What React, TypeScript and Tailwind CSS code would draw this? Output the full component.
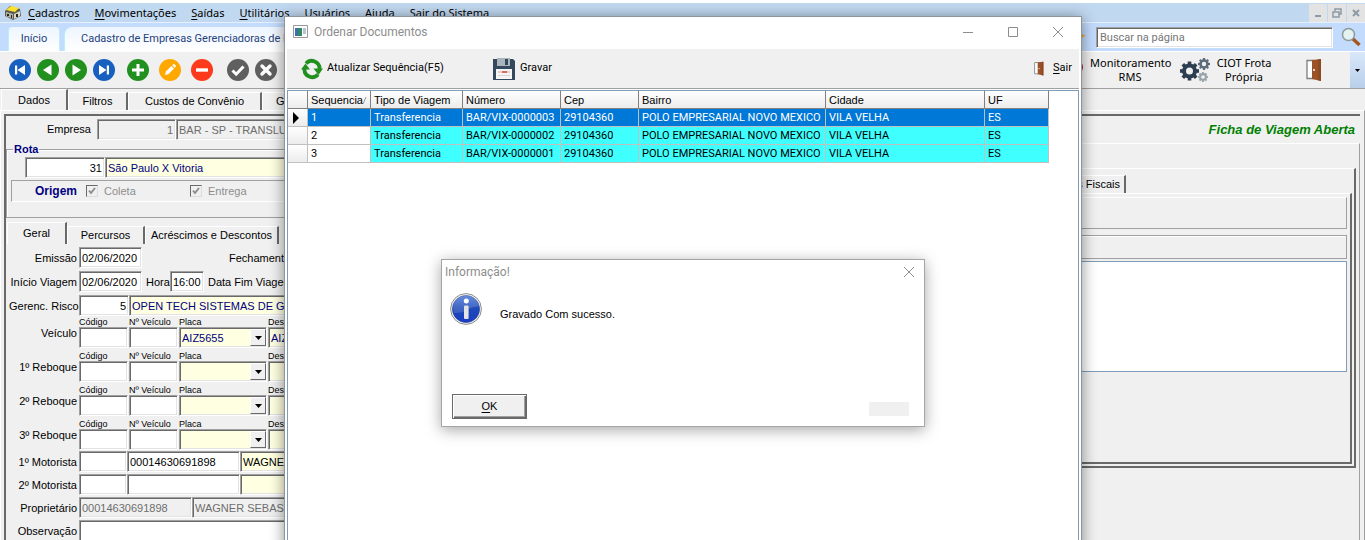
import React from 'react';

const menuItems = ['Cadastros', 'Movimentações', 'Saídas', 'Utilitários', 'Usuários', 'Ajuda', 'Sair do Sistema'];

const documentos = [
  { seq: 1, tipo: 'Transferencia', numero: 'BAR/VIX-0000003', cep: '29104360', bairro: 'POLO EMPRESARIAL NOVO MEXICO', cidade: 'VILA VELHA', uf: 'ES' },
  { seq: 2, tipo: 'Transferencia', numero: 'BAR/VIX-0000002', cep: '29104360', bairro: 'POLO EMPRESARIAL NOVO MEXICO', cidade: 'VILA VELHA', uf: 'ES' },
  { seq: 3, tipo: 'Transferencia', numero: 'BAR/VIX-0000001', cep: '29104360', bairro: 'POLO EMPRESARIAL NOVO MEXICO', cidade: 'VILA VELHA', uf: 'ES' },
];

const navIcons = [
  { label: 'Primeiro', color: '#1760c0', shape: <path d="M6 6.5h2.200v9H6zM16 6v10L8.500 11z" fill="#fff" /> },
  { label: 'Anterior', color: '#22901f', shape: <path d="M14.500 5.500v11L6 11z" fill="#fff" /> },
  { label: 'Próximo', color: '#22901f', shape: <path d="M7.500 5.500v11l8.500-5.500z" fill="#fff" /> },
  { label: 'Último', color: '#1760c0', shape: <path d="M13.800 6.500H16v9h-2.200zM6 6v10l7.500-5z" fill="#fff" /> },
];

const editIcons = [
  { label: 'Incluir', color: '#22901f', shape: <path d="M9.500 5h3v4.500H17v3h-4.500V17h-3v-4.500H5v-3h4.500z" fill="#fff" /> },
  { label: 'Editar', color: '#ffa800', shape: <path d="M6 16l.8-3.400 5.600-5.600 2.600 2.600-5.600 5.600zM13.200 6.200l1-1q.6-.4 1.200.1l1.300 1.300q.5.6 0 1.200l-1 1z" fill="#fff" /> },
  { label: 'Excluir', color: '#fd3a1c', shape: <path d="M5 9.300h12v3.400H5z" fill="#fff" /> },
];

const confirmIcons = [
  { label: 'Confirmar', color: '#5f5f5f', shape: <path d="M5.500 11.500l3.700 3.700 7.300-7.700" fill="none" stroke="#fff" strokeWidth="3" /> },
  { label: 'Cancelar', color: '#5f5f5f', shape: <path d="M7 7l8 8M15 7l-8 8" stroke="#fff" strokeWidth="3.400" strokeLinecap="round" /> },
];

const bevel =
  'border border-t-[#a0a0a0] border-l-[#a0a0a0] border-r-white border-b-white shadow-[inset_1px_1px_0_#696969,inset_-1px_-1px_0_#e3e3e3] outline-none rounded-none';

function Field({ label, value = '', className = '' }: { label: string; value?: string; className?: string }) {
  return <input aria-label={label} defaultValue={value} className={`${bevel} h-[21px] px-[2px] text-[11px] ${className}`} />;
}

function Tab({ children, active, className = '' }: { children: React.ReactNode; active?: boolean; className?: string }) {
  return (
    <button
      role="tab"
      aria-selected={!!active}
      className={`border-t border-l border-t-white border-l-white border-r-2 border-r-[#696969] whitespace-nowrap ${active ? 'self-stretch' : 'self-end h-[18px]'} ${className}`}
    >
      {children}
    </button>
  );
}

function RoundButton({ label, color, shape }: { label: string; color: string; shape: React.ReactNode }) {
  return (
    <button aria-label={label}>
      <svg width="22" height="22" viewBox="0 0 22 22" className="block">
        <circle cx="11" cy="11" r="11" fill={color} />
        {shape}
      </svg>
    </button>
  );
}

function DoorIcon({ className }: { className: string }) {
  return (
    <svg viewBox="0 0 16 22" className={className}>
      <path d="M1 1.500h6v18H1z" fill="#fff" stroke="#7d7d7d" strokeWidth="1.300" />
      <path d="M6 1l9-1v22l-9-2z" fill="#9b5228" />
      <path d="M12 .400L15 0v22l-3-.700z" fill="#8b4a22" />
      <circle cx="8" cy="11" r="1" fill="#fff" />
    </svg>
  );
}

function Gear({ x, y, r, color }: { x: number; y: number; r: number; color: string }) {
  return (
    <g transform={`translate(${x} ${y})`}>
      <circle r={r * 0.58} fill="none" stroke={color} strokeWidth={r * 0.42} />
      {[0, 45, 90, 135, 180, 225, 270, 315].map((a) => (
        <rect key={a} x={-r * 0.19} y={-r} width={r * 0.38} height={r * 0.35} fill={color} transform={`rotate(${a})`} />
      ))}
    </g>
  );
}

function MenuBar() {
  return (
    <div className="mt-[3px] flex h-[19px] items-center justify-between bg-[#c0d8f0]">
      <div className="flex items-center pl-1 font-['Noto_Sans',sans-serif] text-[11px]">
        <svg width="18" height="16" viewBox="0 0 18 16" className="mr-[6px]">
          <path d="M1 6l5-5 10 3 1 7-8 4-8-4z" fill="#5b5b50" />
          <path d="M2 5l5-4 8 2-4 4z" fill="#fbe22c" />
          <path d="M2 7l7 2v5l-7-3z" fill="#b4b4a4" />
          <path d="M10 9l6-3v5l-6 3z" fill="#d8d8c8" />
          <path d="M3 9h2v2H3zM7 10h1v3H7zM12 9h2v3h-2z" fill="#222" />
        </svg>
        <nav className="flex gap-[15px]">
          {menuItems.map((m) => (
            <a key={m} href="#" className="whitespace-nowrap leading-[19px]">
              <span className="underline underline-offset-2">{m[0]}</span>
              {m.slice(1)}
            </a>
          ))}
        </nav>
      </div>
      <div className="flex gap-px">
        <button aria-label="Minimizar" className="flex h-[18px] w-[18px] items-center justify-center bg-[#e3e3e3]">
          <svg width="10" height="10"><path d="M2 8h6" stroke="#8a9aa8" strokeWidth="2" /></svg>
        </button>
        <button aria-label="Restaurar" className="flex h-[18px] w-[18px] items-center justify-center bg-[#e3e3e3]">
          <svg width="10" height="10"><path d="M3 3V1h6v5H7M1 4h6v5H1z" fill="none" stroke="#8a9aa8" strokeWidth="1.500" /></svg>
        </button>
        <button aria-label="Fechar" className="flex h-[18px] w-[18px] items-center justify-center bg-[#e3e3e3]">
          <svg width="10" height="10"><path d="M2 2l6 6M8 2L2 8" stroke="#8a9aa8" strokeWidth="2" /></svg>
        </button>
      </div>
    </div>
  );
}

function PageTabs() {
  return (
    <div className="flex h-[29px] items-center justify-between border-t border-[#e6effb] bg-[#c3dbfd]">
      <div className="flex gap-1 self-stretch pl-2 pt-1 font-['Roboto',sans-serif] text-[11px] text-[#24427c]">
        <a href="#" className="flex w-[52px] items-center justify-center rounded-t-sm border-x border-[#b8f0fa] bg-gradient-to-b from-[#eef5ff] to-white">Início</a>
        <a href="#" className="flex w-[260px] items-center whitespace-nowrap rounded-tl-lg border-l border-[#b8f0fa] bg-gradient-to-b from-[#eef5ff] to-white pl-4">
          Cadastro de Empresas Gerenciadoras de R
        </a>
      </div>
      <div className="flex items-center pr-1">
        <svg width="18" height="18" viewBox="0 0 18 18" className="mr-[10px]">
          <path d="M9 1l2.500 5.500 6 .6-4.500 4 1.300 6L9 14l-5.300 3.100 1.300-6-4.500-4 6-.6z" fill="#f4a91d" />
        </svg>
        <input
          aria-label="Buscar na página"
          placeholder="Buscar na página"
          className={`${bevel} h-[21px] w-[237px] bg-white px-[3px] font-['Roboto',sans-serif] text-[11px] placeholder:text-[#757575]`}
        />
        <button aria-label="Buscar" className="ml-2">
          <svg width="20" height="20" viewBox="0 0 20 20" className="block">
            <path d="M11 11l7.500 7" stroke="#a3571f" strokeWidth="3.400" />
            <circle cx="7.500" cy="7.500" r="6" fill="#e4f3f1" stroke="#8c9a9a" strokeWidth="1.500" />
          </svg>
        </button>
      </div>
    </div>
  );
}

function Toolbar() {
  return (
    <div className="flex h-[38px] items-center justify-between border-t border-white border-b border-b-[#a0a0a0] bg-[#f0f0f0]">
      <div className="flex items-center pl-[9px]">
        <div className="flex gap-[6px]">{navIcons.map((i) => <RoundButton key={i.label} {...i} />)}</div>
        <div className="ml-3 flex gap-[10px]">{editIcons.map((i) => <RoundButton key={i.label} {...i} />)}</div>
        <div className="ml-[14px] flex gap-[6px]">{confirmIcons.map((i) => <RoundButton key={i.label} {...i} />)}</div>
      </div>
      <div className="flex items-center self-stretch font-['Noto_Sans',sans-serif] text-[11px] leading-[14px]">
        <button className="flex items-center gap-[7px]">
          <svg width="14" height="22"><ellipse cx="7" cy="8" rx="7" ry="7" fill="#a3124a" /><path d="M5 14h4v6H5z" fill="#888" /></svg>
          <span className="w-20">Monitoramento RMS</span>
        </button>
        <button className="ml-[10px] flex items-center gap-1">
          <svg width="30" height="26" viewBox="0 0 30 26">
            <Gear x={9.5} y={14} r={9.5} color="#2c3e50" />
            <Gear x={24} y={7} r={6} color="#5c6c7b" />
            <Gear x={23} y={20} r={5} color="#98a2aa" />
          </svg>
          <span className="w-[60px]">CIOT Frota Própria</span>
        </button>
        <button aria-label="Sair" className="ml-8">
          <DoorIcon className="block h-[22px] w-4" />
        </button>
        <button aria-label="Mais opções" className="ml-7 flex w-[15px] items-center justify-center self-stretch bg-gradient-to-b from-[#d9e8fa] to-[#b9cfea]">
          <svg width="5" height="3"><path d="M0 0h5L2.500 3z" /></svg>
        </button>
      </div>
    </div>
  );
}

function FormRow({ label, children }: { label: string; children: React.ReactNode }) {
  return (
    <div className="flex h-[21px]">
      <span className="w-[70px] shrink-0 pr-[2px] text-right leading-[23px] whitespace-nowrap">{label}</span>
      {children}
    </div>
  );
}

function VehicleRow({ label, placa = '', desc = '' }: { label: string; placa?: string; desc?: string }) {
  return (
    <div className="flex items-end">
      <span className="w-[70px] shrink-0 pr-[2px] pb-1 text-right leading-[21px] whitespace-nowrap">{label}</span>
      <label className="w-[50px] text-[9px] leading-[10px]">
        Código
        <Field label="Código" className="block w-[49px] bg-white" />
      </label>
      <label className="w-[50px] whitespace-nowrap text-[9px] leading-[10px]">
        Nº Veículo
        <Field label="Nº Veículo" className="block w-[49px] bg-white" />
      </label>
      <label className="w-[89px] text-[9px] leading-[10px]">
        Placa
        <span className="relative block">
          <select className={`${bevel} block h-[21px] w-[88px] appearance-none bg-[#ffffe1] px-[2px] text-[11px] text-[#000080]`}>
            <option>{placa}</option>
          </select>
          <span className="pointer-events-none absolute right-[2px] top-[2px] flex h-[17px] w-4 items-center justify-center border border-t-white border-l-white border-r-[#696969] border-b-[#696969] bg-[#f0f0f0]">
            <svg width="7" height="4"><path d="M0 0h7L3.500 4z" /></svg>
          </span>
        </span>
      </label>
      <label className="flex-1 text-[9px] leading-[10px]">
        Descrição
        <Field label="Descrição" value={desc} className="block w-full bg-[#ffffe1] text-[#000080]" />
      </label>
    </div>
  );
}

function TripForm() {
  return (
    <div className="w-[590px] shrink-0">
      <fieldset className="mr-1 h-[75px] border border-[#a0a0a0] pl-[4px] shadow-[inset_1px_1px_0_#fff]">
        <legend className="ml-[2px] px-px font-bold leading-[12px] text-[#000080]">Rota</legend>
        <div className="mt-[2px] flex pl-[14px]">
          <Field label="Código da rota" value="31" className="w-20 bg-white text-right" />
          <Field label="Rota" value="São Paulo X Vitoria" className="flex-1 bg-[#ffffe1] text-[#000080]" />
        </div>
        <div className="mt-[2px] flex h-[22px] items-center border border-[#a0a0a0] border-r-white border-b-white pl-[23px] text-[#8d8d8d]">
          <span className="w-[51px] text-[12px] font-bold text-[#000080]">Origem</span>
          {['Coleta', 'Entrega'].map((name) => (
            <label key={name} className="flex w-[104px] items-center gap-[6px]">
              <input type="checkbox" defaultChecked disabled className="peer sr-only" />
              <span className="flex h-3 w-3 items-center justify-center border border-t-[#696969] border-l-[#696969] border-r-[#dcdcdc] border-b-[#dcdcdc]">
                <svg width="8" height="8"><path d="M1 3.500l2 2.500 4-5" fill="none" stroke="#8d8d8d" strokeWidth="2" /></svg>
              </span>
              {name}
            </label>
          ))}
        </div>
      </fieldset>

      <div role="tablist" className="mt-1 flex h-[22px] pl-px">
        <Tab active className="w-[60px]">Geral</Tab>
        <Tab className="w-[78px]">Percursos</Tab>
        <Tab className="w-[134px]">Acréscimos e Descontos</Tab>
      </div>

      <div className="flex flex-col gap-[3px] pl-[3px] pt-[3px]">
        <FormRow label="Emissão">
          <Field label="Emissão" value="02/06/2020" className="w-[63px] bg-white" />
          <span className="ml-[87px] leading-[23px]">Fechamento</span>
        </FormRow>
        <FormRow label="Início Viagem">
          <Field label="Início Viagem" value="02/06/2020" className="w-[63px] bg-white" />
          <span className="ml-1 w-6 leading-[23px]">Hora</span>
          <Field label="Hora" value="16:00" className="w-[34px] bg-white" />
          <span className="ml-1 leading-[23px]">Data Fim Viagem</span>
        </FormRow>
        <FormRow label="Gerenc. Risco">
          <Field label="Código do gerenciador" value="5" className="w-[50px] bg-white text-right" />
          <Field label="Gerenciador de risco" value="OPEN TECH SISTEMAS DE GERENCIAMENTO" className="flex-1 bg-[#ffffe1] text-[#000080]" />
        </FormRow>
      </div>

      <div className="flex flex-col gap-[3px] pl-[3px] pt-px">
        <VehicleRow label="Veículo" placa="AIZ5655" desc="AIZ5655" />
        <VehicleRow label="1º Reboque" />
        <VehicleRow label="2º Reboque" />
        <VehicleRow label="3º Reboque" />
      </div>

      <div className="flex flex-col gap-[2px] pl-[3px] pt-px">
        <FormRow label="1º Motorista">
          <Field label="Código do 1º motorista" className="w-12 bg-white" />
          <Field label="CPF do 1º motorista" value="00014630691898" className="w-[113px] bg-white" />
          <Field label="Nome do 1º motorista" value="WAGNER" className="flex-1 bg-[#ffffe1]" />
        </FormRow>
        <FormRow label="2º Motorista">
          <Field label="Código do 2º motorista" className="w-12 bg-white" />
          <Field label="CPF do 2º motorista" className="w-[113px] bg-white" />
          <Field label="Nome do 2º motorista" className="flex-1 bg-[#ffffe1]" />
        </FormRow>
        <FormRow label="Proprietário">
          <Field label="CPF do proprietário" value="00014630691898" className="w-[113px] text-[#6d6d6d]" />
          <Field label="Nome do proprietário" value="WAGNER SEBASTIAO" className="flex-1 text-[#6d6d6d]" />
        </FormRow>
        <FormRow label="Observação">
          <textarea aria-label="Observação" className={`${bevel} h-10 flex-1 resize-none bg-white`} />
        </FormRow>
      </div>
    </div>
  );
}

function FiscalPanel() {
  return (
    <div className="min-w-0 flex-1 border-t border-t-white border-r border-r-[#a0a0a0] pt-6 pr-[3px]">
      <div className="flex h-[300px] flex-col border-t border-r-2 border-b-2 border-t-white border-r-[#696969] border-b-[#696969] pt-[6px] pr-[2px] pb-[2px]">
        <div role="tablist" className="flex justify-end pr-[226px]">
          <Tab className="px-1">Documentos Fiscais</Tab>
        </div>
        <div className="flex-1 border-t border-r-2 border-b-2 border-t-white border-r-[#696969] border-b-[#696969] pt-[3px] pr-[3px]">
          <div className="h-8 border border-[#a0a0a0] border-t-white" />
          <div className="mt-[6px] h-6 border border-[#a0a0a0] shadow-[inset_0_1px_0_#fff]" />
          <textarea aria-label="Documentos" className="mt-[2px] block h-[111px] w-full resize-none border border-[#7f9db9] bg-white outline-none" />
        </div>
      </div>
    </div>
  );
}

function OrderWindow() {
  const cell = 'border-r border-b border-[#c0c0c0] px-[3px] pt-px whitespace-nowrap overflow-hidden';
  const head = 'border-r border-b border-[#808080] px-[3px] text-left font-normal whitespace-nowrap bg-gradient-to-b from-white to-[#ececec]';
  return (
    <section className="absolute -bottom-6 left-[284px] right-[283px] top-4 flex flex-col border border-[#8f9499] bg-white shadow-[0_2px_14px_rgba(0,0,0,0.45)]">
      <header className="flex h-8 shrink-0 items-center justify-between pb-[3px] pl-2 pr-[18px]">
        <h1 className="flex items-center gap-[6px] font-['Roboto',sans-serif] text-[12px] text-[#8d8d8d]">
          <svg width="15" height="13" viewBox="0 0 15 13">
            <path d="M.5.5h14v12H.5z" fill="#fff" stroke="#9a9a9a" />
            <path d="M2 3h7v8H2z" fill="#2f8a6a" />
            <path d="M2 3h3v8H2z" fill="#3d6fb0" />
            <path d="M10 3h3v6h-3z" fill="#b9c4cc" />
          </svg>
          Ordenar Documentos
        </h1>
        <div className="flex gap-[35px]">
          {['M0 5.500h10', 'M.5.500h9v9h-9z', 'M0 0l10 10M10 0L0 10'].map((d, i) => (
            <button key={d} aria-label={['Minimizar', 'Maximizar', 'Fechar'][i]}>
              <svg width="10" height="10" className="block overflow-visible"><path d={d} fill="none" stroke="#8d8d8d" /></svg>
            </button>
          ))}
        </div>
      </header>

      <div className="mx-[2px] flex h-10 shrink-0 items-center border-b border-[#a0a0a0] bg-[#f0f0f0] font-['Roboto',sans-serif] text-[11px]">
        <button className="ml-[14px] flex w-48 items-center gap-1">
          <svg width="22" height="22" viewBox="0 0 22 22">
            <path d="M5 5.500A7.700 7.700 0 0 1 18.500 11M17 16.500A7.700 7.700 0 0 1 3.500 11" fill="none" stroke="#22901f" strokeWidth="3.800" />
            <path d="M12.500 10.500h9.500L17.500 17zM0 11.500h9L4.500 5.500z" fill="#22901f" />
          </svg>
          Atualizar Sequência(F5)
        </button>
        <button className="flex items-center gap-[5px]">
          <svg width="22" height="22" viewBox="0 0 22 22">
            <path d="M0 1h20l2 2v19H0z" fill="#34495e" />
            <path d="M4 0h13v8H4z" fill="#aab4bb" />
            <path d="M12 1h3v6h-3z" fill="#34495e" />
            <path d="M3 11h16v10H3z" fill="#f5f5f5" />
            <path d="M5 14h12" stroke="#d8a8a0" /><path d="M9 14h5" stroke="#d05040" strokeWidth="1.500" />
            <path d="M5 17.500h12" stroke="#d5d5d5" />
          </svg>
          Gravar
        </button>
        <button className="ml-auto mr-[7px] flex items-center gap-[9px]">
          <DoorIcon className="h-[15px] w-[10px]" />
          <span><span className="underline underline-offset-2">S</span>air</span>
        </button>
      </div>

      <div className="mx-[2px] mt-px flex-1 border border-[#7f9db9]">
        <table className="w-[761px] table-fixed border-separate border-spacing-0 font-['Roboto',sans-serif] text-[11px]">
          <colgroup>
            <col className="w-5" />
            <col className="w-[63px]" />
            <col className="w-[92px]" />
            <col className="w-[98px]" />
            <col className="w-[78px]" />
            <col className="w-[187px]" />
            <col className="w-[159px]" />
            <col className="w-16" />
          </colgroup>
          <thead>
            <tr className="h-[18px] font-['Liberation_Sans',sans-serif] leading-[16px]">
              <th className={head} aria-label="Atual" />
              <th className={head}>
                <span className="flex items-center">Sequencia<svg width="5" height="8"><path d="M0 8l3-7" stroke="#999" /></svg></span>
              </th>
              <th className={head}>Tipo de Viagem</th>
              <th className={head}>Número</th>
              <th className={head}>Cep</th>
              <th className={head}>Bairro</th>
              <th className={head}>Cidade</th>
              <th className={head}>UF</th>
            </tr>
          </thead>
          <tbody className="leading-[16px]">
            {documentos.map((d, i) => (
              <tr key={d.seq} className={`h-[18px] ${i === 0 ? 'bg-[#0078d7] text-white' : 'bg-[#40ffff]'}`}>
                <td className="border-r border-b border-[#c0c0c0] bg-gradient-to-b from-white to-[#ececec] pl-[5px]">
                  {i === 0 && <svg width="7" height="12" className="block"><path d="M0 0l6 6-6 6z" /></svg>}
                </td>
                <td className={`${cell} ${i === 0 ? '' : 'bg-white'}`}>{d.seq}</td>
                <td className={cell}>{d.tipo}</td>
                <td className={cell}>{d.numero}</td>
                <td className={cell}>{d.cep}</td>
                <td className={cell}>{d.bairro}</td>
                <td className={cell}>{d.cidade}</td>
                <td className={cell}>{d.uf}</td>
              </tr>
            ))}
          </tbody>
        </table>
      </div>
    </section>
  );
}

function InfoDialog() {
  return (
    <div role="dialog" aria-label="Informação!" className="absolute left-[441px] top-[259px] flex h-[168px] w-[484px] flex-col border border-[#a5a5a5] bg-white shadow-[0_3px_14px_rgba(0,0,0,0.35)]">
      <header className="flex h-6 items-center justify-between pl-[3px] pr-[10px] font-['Roboto',sans-serif] text-[12px] text-[#8d8d8d]">
        Informação!
        <button aria-label="Fechar">
          <svg width="10" height="10" className="block overflow-visible"><path d="M0 0l10 10M10 0L0 10" stroke="#8d8d8d" /></svg>
        </button>
      </header>
      <div className="mt-[9px] flex items-center gap-[18px] pl-2">
        <svg width="32" height="32" viewBox="0 0 32 32">
          <defs>
            <linearGradient id="info" x1="0" y1="0" x2="0" y2="1">
              <stop offset="0" stopColor="#4a78d8" />
              <stop offset="0.500" stopColor="#1e49b8" />
              <stop offset="1" stopColor="#1a3cc4" />
            </linearGradient>
          </defs>
          <circle cx="16" cy="16" r="15.400" fill="#f4f4f4" stroke="#8c8c8c" />
          <circle cx="16" cy="16" r="13.600" fill="url(#info)" stroke="#27408c" strokeWidth="0.600" />
          <path d="M3 15a13 13 0 0 1 26-2q-8 1-12 4t-13 3z" fill="#fff" opacity="0.150" />
          <circle cx="16.300" cy="8" r="2.500" fill="#fff" />
          <rect x="14" y="12.500" width="4.600" height="13.500" rx="1" fill="#e4e4e4" />
        </svg>
        <p className="pt-[10px]">Gravado Com sucesso.</p>
      </div>
      <div className="mt-auto flex items-end justify-between pb-[7px] pl-[10px] pr-[15px]">
        <button className="h-[25px] w-[75px] border border-[#696969] bg-[#f0f0f0] shadow-[inset_1px_1px_0_#fff,inset_-1px_-1px_0_#696969,inset_-2px_-2px_0_#a0a0a0]">
          <span className="underline underline-offset-2">O</span>K
        </button>
        <div className="mb-[3px] h-[14px] w-10 bg-[#f0f0f0]" />
      </div>
    </div>
  );
}

export default function App() {
  return (
    <div className="relative flex h-screen flex-col overflow-hidden bg-white font-['Liberation_Sans',Arial,sans-serif] text-[11px] text-black">
      <MenuBar />
      <PageTabs />
      <Toolbar />
      <main className="flex min-h-0 flex-1 flex-col bg-[#f0f0f0]">
        <div role="tablist" className="flex h-[21px] shrink-0 pl-px">
          <Tab active className="w-[67px]">Dados</Tab>
          <Tab className="w-[60px]">Filtros</Tab>
          <Tab className="w-[134px]">Custos de Convênio</Tab>
          <Tab className="w-14">Geral</Tab>
        </div>
        <div className="min-h-0 flex-1 border border-b-0 border-white border-r-[#a0a0a0] pl-[3px] pr-1 pt-[3px]">
          <div className="border-t-2 border-l-2 border-[#696969]">
            <div className="flex h-[27px] items-center justify-between pr-[5px]">
              <div className="flex w-[590px] items-center">
                <span className="w-[91px] pr-[6px] text-right">Empresa</span>
                <Field label="Código da empresa" value="1" className="w-[79px] text-right text-[#6d6d6d]" />
                <Field label="Empresa" value="BAR - SP - TRANSLUTE" className="flex-1 text-[#6d6d6d]" />
              </div>
              <strong className="text-[13px] italic text-[#008000]">Ficha de Viagem Aberta</strong>
            </div>
            <div className="flex">
              <TripForm />
              <FiscalPanel />
            </div>
          </div>
        </div>
      </main>
      <OrderWindow />
      <InfoDialog />
    </div>
  );
}
